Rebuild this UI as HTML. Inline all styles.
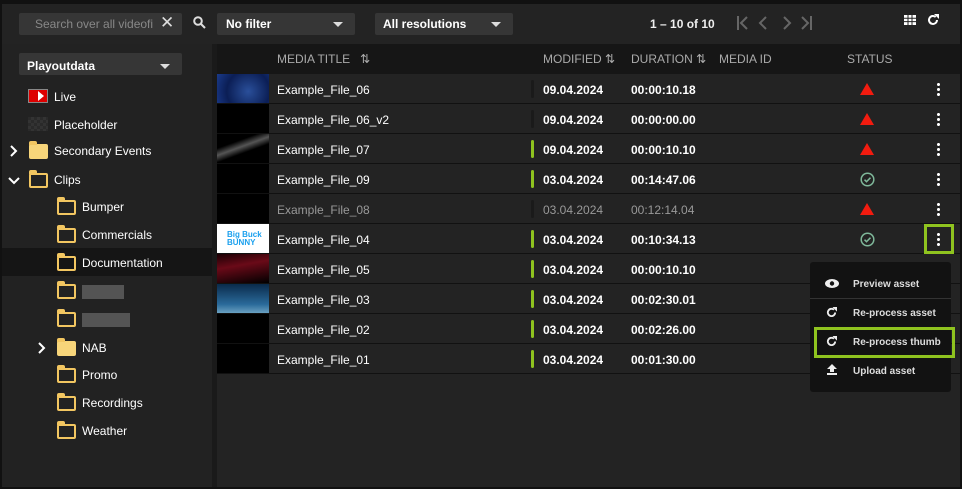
<!DOCTYPE html>
<html><head><meta charset="utf-8"><style>
*{box-sizing:border-box;margin:0;padding:0}
body{width:962px;height:489px;background:#111;font-family:"Liberation Sans",sans-serif;font-size:12px;color:#fff;position:relative;overflow:hidden}
.a{position:absolute}
.main{left:2px;top:4px;width:958px;height:483px;background:#232323}
.box{background:#363636;border-radius:2px}
.caret{width:0;height:0;border-left:5px solid transparent;border-right:5px solid transparent;border-top:5px solid #ddd}
.left{left:2px;top:44px;width:210px;height:442px;background:#222}
.tree div{position:absolute;left:0;width:210px;height:28px;font-size:12px;line-height:30px}
.fold{position:absolute;width:19px;height:15px;border:2px solid #f2c661;border-radius:2px}
.fold:before{content:"";position:absolute;left:-2px;top:-5px;width:8px;height:4px;background:#f2c661;border-radius:2px 2px 0 0}
.ff{background:#f7d57a;border-color:#f7d57a}
.hdr{left:217px;top:44px;width:743px;height:30px;background:#161616;color:#aaa;font-size:12px;line-height:30px}
.row{position:absolute;left:217px;width:743px;height:30px;border-bottom:1px solid #111;line-height:32px;font-size:12px}
.th{position:absolute;left:0;top:0;width:52px;height:29px;background:#000}
.row span{position:absolute}
.bar{position:absolute;left:314px;top:6px;width:3px;height:18px;border-radius:2px;background:#1a1a1a}
.g{background:#8fc31f}
.tri{position:absolute;left:643px;top:9px;width:0;height:0;border-left:7px solid transparent;border-right:7px solid transparent;border-bottom:12px solid #f21b0f}
.ok{position:absolute;left:643px;top:8px}
.dots{position:absolute;left:720px;top:8px;width:3px;height:14px;background:radial-gradient(circle,#fff 1.4px,transparent 1.6px) 0 0/3px 5px repeat-y}
.menu{left:810px;top:262px;width:141px;height:130px;background:#121212;border-radius:3px}
.mi{position:absolute;left:43px;font-size:10px;font-weight:bold;color:#ddd}
</style></head><body>
<div class="a main"></div>
<div class="a box" style="left:19px;top:13px;width:163px;height:22px"></div>
<div class="a" style="left:35px;top:17px;font-size:12px;color:#888">Search over all videofi</div>
<div class="a" style="left:160px;top:13px;font-size:17px;color:#ddd">✕</div>
<svg class="a" style="left:193px;top:16px" width="13" height="13" viewBox="0 0 13 13"><circle cx="5" cy="5" r="3.8" stroke="#ddd" stroke-width="2" fill="none"/><path d="M8 8l4 4" stroke="#ddd" stroke-width="2"/></svg>
<div class="a box" style="left:217px;top:13px;width:138px;height:22px"></div>
<div class="a" style="left:226px;top:17px;font-weight:bold;font-size:12px">No filter</div>
<div class="a caret" style="left:333px;top:22px"></div>
<div class="a box" style="left:375px;top:13px;width:138px;height:22px"></div>
<div class="a" style="left:383px;top:17px;font-weight:bold;font-size:12px">All resolutions</div>
<div class="a caret" style="left:491px;top:22px"></div>
<div class="a" style="left:650px;top:17px;font-weight:bold;font-size:12px;color:#eee">1 – 10 of 10</div>
<svg class="a" style="left:736px;top:15px" width="76" height="16" fill="none" stroke="#666" stroke-width="2"><path d="M2 1v14M11 2l-6 6 6 6M30 2l-6 6 6 6M48 2l6 6-6 6M66 2l6 6-6 6M75 1v14"/></svg>
<svg class="a" style="left:904px;top:15px" width="12" height="10"><path d="M0 0h12v10H0z" fill="#fff"/><path d="M4 0v10M8 0v10M0 3.3h12M0 6.6h12" stroke="#232323" stroke-width="1"/></svg>
<svg class="a" style="left:927px;top:14px" width="12" height="12" viewBox="0 0 12 12"><path d="M10 6a4 4 0 1 1-1.3-3" stroke="#fff" stroke-width="2" fill="none"/><path d="M7 0h5v5z" fill="#fff"/></svg>
<div class="a left"></div>
<div class="a box" style="left:19px;top:53px;width:163px;height:22px"></div>
<div class="a" style="left:27px;top:59px;font-weight:bold;font-size:12px">Playoutdata</div>
<div class="a caret" style="left:160px;top:64px"></div>
<svg class="a" style="left:9px;top:145px" width="10" height="12" fill="none" stroke="#fff" stroke-width="2"><path d="M2 1l5 5-5 5"/></svg>
<svg class="a" style="left:8px;top:176px" width="12" height="10" fill="none" stroke="#fff" stroke-width="2"><path d="M1 2l5 5 5-5"/></svg>
<svg class="a" style="left:37px;top:342px" width="10" height="12" fill="none" stroke="#fff" stroke-width="2"><path d="M2 1l5 5-5 5"/></svg>
<div class="a tree" style="left:2px;top:0">
<div style="top:82px"><span class="a" style="left:26px;top:7px;width:20px;height:14px;background:#d00;border:1px solid #888"></span><span class="a" style="left:36px;top:9px;border-left:6px solid #fff;border-top:5px solid transparent;border-bottom:5px solid transparent;width:0;height:0"></span><span class="a" style="left:52px">Live</span></div>
<div style="top:110px"><span class="a" style="left:26px;top:7px;width:20px;height:14px;background:repeating-conic-gradient(#333 0 25%,#2a2a2a 0 50%) 0 0/6px 6px"></span><span class="a" style="left:52px">Placeholder</span></div>
<div style="top:136px"><span class="fold ff" style="left:27px;top:8px"></span><span class="a" style="left:52px">Secondary Events</span></div>
<div style="top:165px"><span class="fold" style="left:27px;top:8px"></span><span class="a" style="left:52px">Clips</span></div>
<div style="top:192px"><span class="fold" style="left:55px;top:8px"></span><span class="a" style="left:80px">Bumper</span></div>
<div style="top:220px"><span class="fold" style="left:55px;top:8px"></span><span class="a" style="left:80px">Commercials</span></div>
<div style="top:248px;background:#151515"><span class="fold" style="left:55px;top:8px"></span><span class="a" style="left:80px">Documentation</span></div>
<div style="top:276px"><span class="fold" style="left:55px;top:8px"></span><span class="a" style="left:80px;top:9px;width:42px;height:14px;background:#6a6a6a;opacity:.7"></span></div>
<div style="top:304px"><span class="fold" style="left:55px;top:8px"></span><span class="a" style="left:80px;top:9px;width:48px;height:14px;background:#6a6a6a;opacity:.7"></span></div>
<div style="top:333px"><span class="fold ff" style="left:55px;top:8px"></span><span class="a" style="left:80px">NAB</span></div>
<div style="top:360px"><span class="fold" style="left:55px;top:8px"></span><span class="a" style="left:80px">Promo</span></div>
<div style="top:388px"><span class="fold" style="left:55px;top:8px"></span><span class="a" style="left:80px">Recordings</span></div>
<div style="top:416px"><span class="fold" style="left:55px;top:8px"></span><span class="a" style="left:80px">Weather</span></div>
</div>
<div class="a" style="left:212px;top:44px;width:5px;height:443px;background:#1a1a1a"></div>
<div class="a hdr" style="line-height:31px"><span class="a" style="left:60px">MEDIA TITLE&nbsp;&nbsp;&nbsp;⇅</span><span class="a" style="left:326px">MODIFIED ⇅</span><span class="a" style="left:414px">DURATION ⇅</span><span class="a" style="left:502px">MEDIA ID</span><span class="a" style="left:630px">STATUS</span></div>

<div class="row" style="top:74px"><div class="th" style="background:radial-gradient(circle at 60% 60%,#2a4f9a,#0b1e55 60%,#1a3a8a)"></div><span style="left:60px">Example_File_06</span><div class="bar"></div><span style="left:326px;font-weight:bold">09.04.2024</span><span style="left:414px;font-weight:bold">00:00:10.18</span><div class="tri"></div><div class="dots"></div></div>
<div class="row" style="top:104px"><div class="th"></div><span style="left:60px">Example_File_06_v2</span><div class="bar"></div><span style="left:326px;font-weight:bold">09.04.2024</span><span style="left:414px;font-weight:bold">00:00:00.00</span><div class="tri"></div><div class="dots"></div></div>
<div class="row" style="top:134px"><div class="th" style="background:linear-gradient(160deg,#000 30%,#555 45%,#000 60%)"></div><span style="left:60px">Example_File_07</span><div class="bar g"></div><span style="left:326px;font-weight:bold">09.04.2024</span><span style="left:414px;font-weight:bold">00:00:10.10</span><div class="tri"></div><div class="dots"></div></div>
<div class="row" style="top:164px"><div class="th"></div><span style="left:60px">Example_File_09</span><div class="bar g"></div><span style="left:326px;font-weight:bold">03.04.2024</span><span style="left:414px;font-weight:bold">00:14:47.06</span><svg class="ok" width="15" height="15"><circle cx="7.5" cy="7.5" r="6.3" stroke="#7fb89a" stroke-width="1.5" fill="none"/><path d="M4.5 7.7l2 2 4-4" stroke="#7fb89a" stroke-width="1.5" fill="none"/></svg><div class="dots"></div></div>
<div class="row" style="top:194px;color:#999"><div class="th"></div><span style="left:60px">Example_File_08</span><div class="bar"></div><span style="left:326px">03.04.2024</span><span style="left:414px">00:12:14.04</span><div class="tri"></div><div class="dots"></div></div>
<div class="row" style="top:224px"><div class="th" style="background:#fff"><span style="left:10px;top:0;color:#1aa0ee;font-size:8px;font-weight:bold;line-height:8px;padding-top:7px">Big Buck<br>BUNNY</span></div><span style="left:60px">Example_File_04</span><div class="bar g"></div><span style="left:326px;font-weight:bold">03.04.2024</span><span style="left:414px;font-weight:bold">00:10:34.13</span><svg class="ok" width="15" height="15"><circle cx="7.5" cy="7.5" r="6.3" stroke="#7fb89a" stroke-width="1.5" fill="none"/><path d="M4.5 7.7l2 2 4-4" stroke="#7fb89a" stroke-width="1.5" fill="none"/></svg><div class="dots"></div></div>
<div class="row" style="top:254px"><div class="th" style="background:linear-gradient(170deg,#1a0004,#6a0a18 40%,#000)"></div><span style="left:60px">Example_File_05</span><div class="bar g"></div><span style="left:326px;font-weight:bold">03.04.2024</span><span style="left:414px;font-weight:bold">00:00:10.10</span></div>
<div class="row" style="top:284px"><div class="th" style="background:linear-gradient(180deg,#0a2a4a,#2a6a9a 70%,#6aa0c0)"></div><span style="left:60px">Example_File_03</span><div class="bar g"></div><span style="left:326px;font-weight:bold">03.04.2024</span><span style="left:414px;font-weight:bold">00:02:30.01</span></div>
<div class="row" style="top:314px"><div class="th"></div><span style="left:60px">Example_File_02</span><div class="bar g"></div><span style="left:326px;font-weight:bold">03.04.2024</span><span style="left:414px;font-weight:bold">00:02:26.00</span></div>
<div class="row" style="top:344px"><div class="th"></div><span style="left:60px">Example_File_01</span><div class="bar g"></div><span style="left:326px;font-weight:bold">03.04.2024</span><span style="left:414px;font-weight:bold">00:01:30.00</span></div>

<div class="a" style="left:924px;top:224px;width:30px;height:30px;border:3px solid #8fc31f"></div>
<div class="a menu">
<svg class="a" style="left:15px;top:17px" width="14" height="9"><ellipse cx="7" cy="4.5" rx="7" ry="4.5" fill="#eee"/><circle cx="7" cy="4.5" r="2.2" fill="#121212"/></svg>
<div class="mi" style="top:17px">Preview asset</div>
<div class="a" style="left:0;top:36px;width:141px;height:1px;background:#333"></div>
<svg class="a" style="left:16px;top:45px" width="11" height="11" viewBox="0 0 12 12"><path d="M10 6a4 4 0 1 1-1.3-3" stroke="#eee" stroke-width="2" fill="none"/><path d="M7 0h5v5z" fill="#eee"/></svg>
<div class="mi" style="top:46px">Re-process asset</div>
<svg class="a" style="left:16px;top:74px" width="11" height="11" viewBox="0 0 12 12"><path d="M10 6a4 4 0 1 1-1.3-3" stroke="#eee" stroke-width="2" fill="none"/><path d="M7 0h5v5z" fill="#eee"/></svg>
<div class="mi" style="top:75px">Re-process thumb</div>
<svg class="a" style="left:17px;top:102px" width="10" height="11"><path d="M5 0l5 5H7v3H3V5H0z M0 9h10v2H0z" fill="#eee"/></svg>
<div class="mi" style="top:104px">Upload asset</div>
</div>
<div class="a" style="left:814px;top:327px;width:141px;height:31px;border:3px solid #8fc31f"></div>
</body></html>
